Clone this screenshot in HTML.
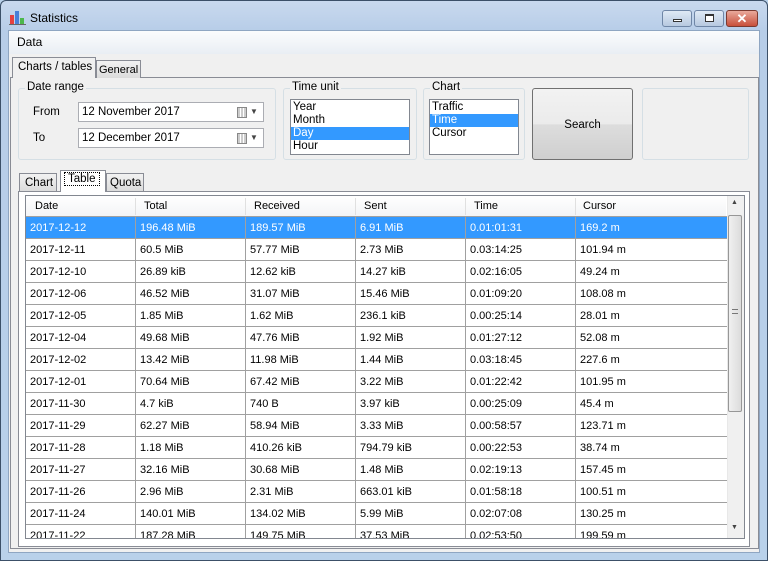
<!DOCTYPE html>
<html><head><style>
*{box-sizing:border-box;margin:0;padding:0}
body{width:768px;height:561px;position:relative;overflow:hidden;font-family:"Liberation Sans",sans-serif;font-size:11.5px;color:#000;background:#b9d1ea}
.a{position:absolute;white-space:nowrap}
.win{left:0;top:0;width:768px;height:561px;border:1px solid #3c5068;border-radius:6px 6px 0 0;background:linear-gradient(#c9d9ee,#b7cde8 30px,#b9d1ea)}
.client{left:8px;top:30px;width:752px;height:523px;background:#f0f0f0;border:1px solid #8fa6c2}
.gb{border:1px solid #d5dfe5;border-radius:3px}
.gl{background:#f0f0f0;padding:0 2px;top:-8px;left:6px}
.lb{background:#fff;border:1px solid #828790}
.lb div{height:13px;line-height:13px;padding-left:2px}
.sel{background:#3399ff;color:#fff}
.dp{background:#fff;border:1px solid #abadb3;height:20px;padding-left:3px;line-height:18px}
table{border-collapse:collapse;table-layout:fixed}
td{height:22px;border:1px solid #a0a0a0;padding-left:4px;font-size:11px;white-space:nowrap;overflow:hidden}
</style></head><body>
<div class="a win"></div>
<svg class="a" style="left:9px;top:10px" width="18" height="15"><rect x="1" y="5" width="4" height="9" fill="#e64040"/><rect x="6" y="1" width="4" height="13" fill="#4a7fd8"/><rect x="11" y="8" width="4" height="6" fill="#4cb84c"/><line x1="0" y1="14.5" x2="17" y2="14.5" stroke="#666"/></svg>
<div class="a" style="left:30px;top:11px;font-size:12px">Statistics</div>
<div class="a" style="left:662px;top:10px;width:30px;height:17px;border:1px solid #6f86a6;border-radius:3px;background:linear-gradient(#dfe9f5,#b7c9e0)"><div class="a" style="left:10px;top:8px;width:9px;height:3px;border:1px solid #333;background:#fff"></div></div>
<div class="a" style="left:694px;top:10px;width:30px;height:17px;border:1px solid #6f86a6;border-radius:3px;background:linear-gradient(#dfe9f5,#b7c9e0)"><div class="a" style="left:10px;top:3px;width:9px;height:8px;border:1px solid #333;border-top-width:2px;background:#fff"></div></div>
<div class="a" style="left:726px;top:10px;width:32px;height:17px;border:1px solid #7b3a30;border-radius:3px;background:linear-gradient(#e9a99b,#c8503b);color:#fff;font-weight:bold;text-align:center;line-height:15px;font-size:13px">✕</div>
<div class="a client"></div>
<div class="a" style="left:9px;top:31px;width:750px;height:23px;background:linear-gradient(#fbfcfd,#e9eef4)"></div>
<div class="a" style="left:17px;top:35px;font-size:12px">Data</div>
<div class="a" style="left:10px;top:77px;width:749px;height:472px;border:1px solid #898c95;background:#fff"></div>
<div class="a" style="left:11px;top:78px;width:747px;height:470px;background:#f0f0f0"></div>
<div class="a" style="left:96px;top:60px;width:45px;height:18px;border:1px solid #898c95;border-bottom:none;background:linear-gradient(#f2f2f2,#dcdcdc);padding:3px 0 0 2px;font-size:11px">General</div>
<div class="a" style="left:12px;top:57px;width:84px;height:21px;border:1px solid #898c95;border-bottom:none;background:#f0f0f0;padding:3px 0 0 5px">Charts / tables</div>
<div class="a gb" style="left:18px;top:88px;width:258px;height:72px"><div class="a gl">Date range</div></div>
<div class="a" style="left:33px;top:106px">From</div>
<div class="a" style="left:33px;top:132px">To</div>
<div class="a dp" style="left:78px;top:102px;width:186px">12 November 2017<span class="a" style="left:158px;top:4px;width:10px;height:11px;border:1px solid #888;background:repeating-linear-gradient(90deg,#ccc 0 2px,#fff 2px 3px)"></span><span class="a" style="left:171px;top:0;font-size:8px;color:#444">▼</span></div>
<div class="a dp" style="left:78px;top:128px;width:186px">12 December 2017<span class="a" style="left:158px;top:4px;width:10px;height:11px;border:1px solid #888;background:repeating-linear-gradient(90deg,#ccc 0 2px,#fff 2px 3px)"></span><span class="a" style="left:171px;top:0;font-size:8px;color:#444">▼</span></div>
<div class="a gb" style="left:283px;top:88px;width:134px;height:72px"><div class="a gl">Time unit</div></div>
<div class="a lb" style="left:290px;top:99px;width:120px;height:56px;padding-top:1px"><div>Year</div><div>Month</div><div class="sel">Day</div><div>Hour</div></div>
<div class="a gb" style="left:423px;top:88px;width:102px;height:72px"><div class="a gl">Chart</div></div>
<div class="a lb" style="left:429px;top:99px;width:90px;height:56px;padding-top:1px"><div>Traffic</div><div class="sel">Time</div><div>Cursor</div></div>
<div class="a" style="left:532px;top:88px;width:101px;height:72px;border:1px solid #707070;border-radius:3px;background:linear-gradient(#f2f2f2,#ebebeb 50%,#dddddd 51%,#cfcfcf);text-align:center;line-height:72px">Search</div>
<div class="a gb" style="left:642px;top:88px;width:107px;height:72px"></div>
<div class="a" style="left:18px;top:191px;width:732px;height:356px;border:1px solid #898c95;background:#fff"></div>
<div class="a" style="left:19px;top:173px;width:38px;height:18px;border:1px solid #898c95;border-bottom:none;background:linear-gradient(#f2f2f2,#dcdcdc);padding:3px 0 0 5px">Chart</div>
<div class="a" style="left:106px;top:173px;width:38px;height:18px;border:1px solid #898c95;border-bottom:none;background:linear-gradient(#f2f2f2,#dcdcdc);padding:3px 0 0 3px">Quota</div>
<div class="a" style="left:60px;top:170px;width:46px;height:22px;border:1px solid #898c95;border-bottom:none;background:#fff;padding:2px 0 0 3px"><span style="border:1px dotted #000;padding:0 3px">Table</span></div>
<div class="a" style="left:25px;top:195px;width:720px;height:344px;border:1px solid #828790;background:#fff;overflow:hidden">
<div class="a" style="left:0;top:0;width:700px;height:21px;background:linear-gradient(#fff,#f3f4f6);border-bottom:1px solid #d5d5d5;font-size:11px">
<span class="a" style="left:9px;top:4px">Date</span><span class="a" style="left:118px;top:4px">Total</span><span class="a" style="left:228px;top:4px">Received</span><span class="a" style="left:338px;top:4px">Sent</span><span class="a" style="left:448px;top:4px">Time</span><span class="a" style="left:557px;top:4px">Cursor</span>
<span class="a" style="left:109px;top:2px;width:1px;height:17px;background:#e0e0e0"></span><span class="a" style="left:219px;top:2px;width:1px;height:17px;background:#e0e0e0"></span><span class="a" style="left:329px;top:2px;width:1px;height:17px;background:#e0e0e0"></span><span class="a" style="left:439px;top:2px;width:1px;height:17px;background:#e0e0e0"></span><span class="a" style="left:549px;top:2px;width:1px;height:17px;background:#e0e0e0"></span></div>
<table class="a" style="left:-1px;top:20px;width:702px">
<colgroup><col style="width:110px"><col style="width:110px"><col style="width:110px"><col style="width:110px"><col style="width:110px"><col style="width:152px"></colgroup>
<tr style="background:#3399ff;color:#fff"><td>2017-12-12</td><td>196.48 MiB</td><td>189.57 MiB</td><td>6.91 MiB</td><td>0.01:01:31</td><td>169.2 m</td></tr>
<tr><td>2017-12-11</td><td>60.5 MiB</td><td>57.77 MiB</td><td>2.73 MiB</td><td>0.03:14:25</td><td>101.94 m</td></tr>
<tr><td>2017-12-10</td><td>26.89 kiB</td><td>12.62 kiB</td><td>14.27 kiB</td><td>0.02:16:05</td><td>49.24 m</td></tr>
<tr><td>2017-12-06</td><td>46.52 MiB</td><td>31.07 MiB</td><td>15.46 MiB</td><td>0.01:09:20</td><td>108.08 m</td></tr>
<tr><td>2017-12-05</td><td>1.85 MiB</td><td>1.62 MiB</td><td>236.1 kiB</td><td>0.00:25:14</td><td>28.01 m</td></tr>
<tr><td>2017-12-04</td><td>49.68 MiB</td><td>47.76 MiB</td><td>1.92 MiB</td><td>0.01:27:12</td><td>52.08 m</td></tr>
<tr><td>2017-12-02</td><td>13.42 MiB</td><td>11.98 MiB</td><td>1.44 MiB</td><td>0.03:18:45</td><td>227.6 m</td></tr>
<tr><td>2017-12-01</td><td>70.64 MiB</td><td>67.42 MiB</td><td>3.22 MiB</td><td>0.01:22:42</td><td>101.95 m</td></tr>
<tr><td>2017-11-30</td><td>4.7 kiB</td><td>740 B</td><td>3.97 kiB</td><td>0.00:25:09</td><td>45.4 m</td></tr>
<tr><td>2017-11-29</td><td>62.27 MiB</td><td>58.94 MiB</td><td>3.33 MiB</td><td>0.00:58:57</td><td>123.71 m</td></tr>
<tr><td>2017-11-28</td><td>1.18 MiB</td><td>410.26 kiB</td><td>794.79 kiB</td><td>0.00:22:53</td><td>38.74 m</td></tr>
<tr><td>2017-11-27</td><td>32.16 MiB</td><td>30.68 MiB</td><td>1.48 MiB</td><td>0.02:19:13</td><td>157.45 m</td></tr>
<tr><td>2017-11-26</td><td>2.96 MiB</td><td>2.31 MiB</td><td>663.01 kiB</td><td>0.01:58:18</td><td>100.51 m</td></tr>
<tr><td>2017-11-24</td><td>140.01 MiB</td><td>134.02 MiB</td><td>5.99 MiB</td><td>0.02:07:08</td><td>130.25 m</td></tr>
<tr><td>2017-11-22</td><td>187.28 MiB</td><td>149.75 MiB</td><td>37.53 MiB</td><td>0.02:53:50</td><td>199.59 m</td></tr>
</table>
<div class="a" style="left:701px;top:0;width:17px;height:342px;background:#f0f0f0;border-left:1px solid #e8e8e8"></div>
<div class="a" style="left:705px;top:3px;font-size:7px;color:#444">▲</div>
<div class="a" style="left:705px;top:328px;font-size:7px;color:#444">▼</div>
<div class="a" style="left:702px;top:19px;width:14px;height:197px;border:1px solid #979797;border-radius:2px;background:linear-gradient(90deg,#f0f0f0,#dcdcdc)"><div class="a" style="left:3px;top:93px;width:6px;height:5px;border-top:1px solid #777;border-bottom:1px solid #777"></div></div>
</div>
</body></html>
